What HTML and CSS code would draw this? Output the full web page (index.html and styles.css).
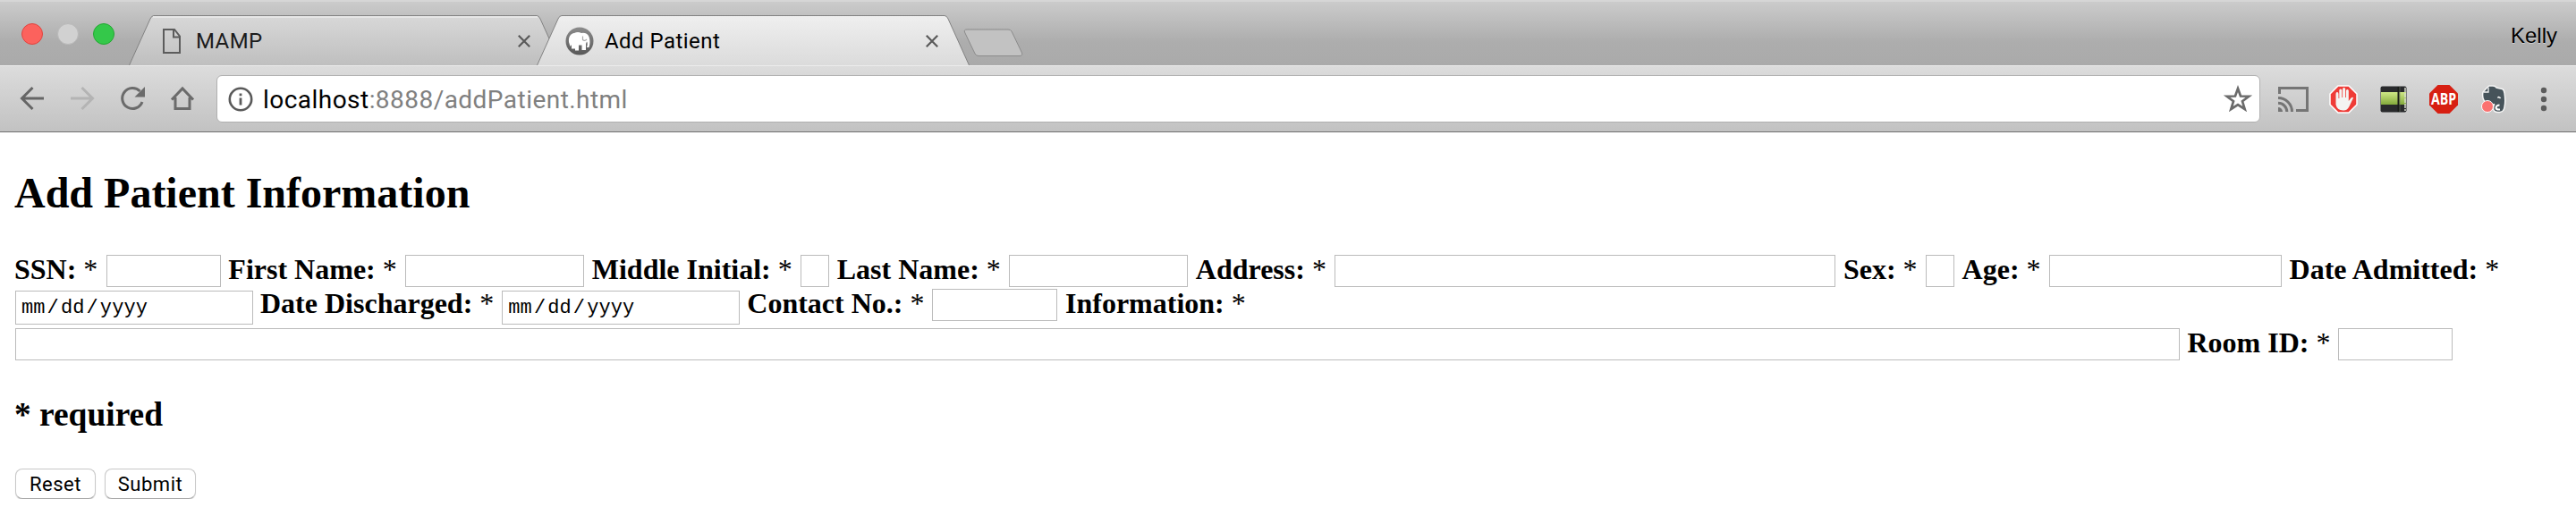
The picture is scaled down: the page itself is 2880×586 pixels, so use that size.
FILE: index.html
```html
<!DOCTYPE html>
<html lang="en">
<head>
<meta charset="utf-8">
<title>Add Patient</title>
<link rel="stylesheet" href="styles.css">
</head>
<body>
<header class="browser">
  <div class="tabstrip">
    <div class="lights"><i class="light red"></i><i class="light gray"></i><i class="light green"></i></div>
    <div class="tab tab-back">
      <svg class="tab-shape" viewBox="0 0 484 56"><defs><linearGradient id="gb" x1="0" y1="0" x2="0" y2="1"><stop offset="0" stop-color="#d8d8d8"/><stop offset="1" stop-color="#bfbfbf"/></linearGradient></defs><path d="M0.5 56L24 4Q25.5 .5 28 .5H456Q458.5 .5 460 4L483.5 56" fill="url(#gb)" stroke="#828282"/><path d="M27 2H457" stroke="#e6e6e6" stroke-width="2"/></svg>
      <svg class="doc" viewBox="0 0 20 28"><path d="M1 1H13L19 8.500V27H1ZM12 1V9.500H19" fill="none" stroke="#5c5c5c" stroke-width="2"/></svg>
      <span class="tab-title mamp">MAMP</span>
      <svg class="close" viewBox="0 0 14 14"><path d="M.8 .8L13.2 13.2M13.2 .8L.8 13.2" stroke="#5a5a5a" stroke-width="2.200"/></svg>
    </div>
    <div class="tab tab-front">
      <svg class="tab-shape" viewBox="0 0 484 56"><defs><linearGradient id="gf" x1="0" y1="0" x2="0" y2="1"><stop offset="0" stop-color="#efefef"/><stop offset="1" stop-color="#dbdbdb"/></linearGradient></defs><path d="M0.5 56L24 4Q25.5 .5 28 .5H456Q458.5 .5 460 4L483.5 56" fill="url(#gf)" stroke="#828282"/></svg>
      <svg class="mampicon" viewBox="0 0 32 32"><defs><linearGradient id="gm" x1="0" y1="0" x2="0" y2="1"><stop offset="0" stop-color="#8c8c8c"/><stop offset="1" stop-color="#585858"/></linearGradient></defs><circle cx="16" cy="16" r="15.500" fill="url(#gm)"/><path d="M4 17C3.500 11 6 7.500 10 7Q14 5 18 7Q24 6 26.500 11Q28.500 17 26.500 23H24Q25.500 18 24 16.500L23 19V26H18.500V20.500H15V26.500H11V24.500H7V20L5.500 22Z" fill="#fff"/><path d="M19.500 10.500V14.500Q21.500 16.500 24 14" fill="none" stroke="#aaa" stroke-width="1.200"/></svg>
      <span class="tab-title addp">Add Patient</span>
      <svg class="close" viewBox="0 0 14 14"><path d="M.8 .8L13.2 13.2M13.2 .8L.8 13.2" stroke="#5a5a5a" stroke-width="2.200"/></svg>
    </div>
    <svg class="newtab" viewBox="0 0 67 33"><path d="M4 1H50Q53 1 54 3L65.500 27Q66.500 30.500 63 30.500H17Q14.500 30.500 13 28L1.500 4Q.5 1 4 1Z" fill="#c2c2c2" stroke="#8b8b8b"/></svg>
    <span class="profile">Kelly</span>
  </div>
  <div class="toolbar">
    <svg class="nav back" viewBox="0 0 28 28"><path d="M27 14H3M14.500 2L2.500 14L14.500 26" fill="none" stroke="#666" stroke-width="3"/></svg>
    <svg class="nav forward" viewBox="0 0 28 28"><path d="M1 14H25M13.500 2L25.500 14L13.500 26" fill="none" stroke="#b4b4b4" stroke-width="3"/></svg>
    <svg class="nav reload" viewBox="0 0 28 28"><path d="M22.500 6A11.500 11.500 0 1 0 25 18" fill="none" stroke="#6b6b6b" stroke-width="3"/><path d="M28 1V12.500H16.500Z" fill="#6b6b6b"/></svg>
    <svg class="nav home" viewBox="0 0 28 28"><path d="M2 15.500L14 3L26 15.500M6 13V25.500H22V13" fill="none" stroke="#6b6b6b" stroke-width="3"/></svg>
    <div class="omnibox">
      <svg class="info" viewBox="0 0 28 28"><circle cx="14" cy="14" r="12.200" fill="none" stroke="#5a5a5a" stroke-width="2.600"/><path d="M14 12.500V20.500M14 7.500V10.200" stroke="#5a5a5a" stroke-width="2.800"/></svg>
      <span class="url"><span class="host">localhost</span>:8888/addPatient.html</span>
      <svg class="star" viewBox="0 0 30 29"><path d="M15 3L18 11.500L27.300 11.700L20 17.300L22.700 26L15 21L7.300 26L10 17.300L2.700 11.700L12 11.500Z" fill="none" stroke="#6b6b6b" stroke-width="2.700"/></svg>
    </div>
    <div class="extensions">
      <div class="slot"><svg class="cast" viewBox="0 0 34 28"><path d="M1.500 8V1.500H32.500V26.500H20" fill="none" stroke="#757575" stroke-width="3"/><path d="M0 12.500A15.500 15.500 0 0 1 15.500 28M0 18.200A9.800 9.800 0 0 1 9.800 28" fill="none" stroke="#757575" stroke-width="3"/><path d="M0 23A5 5 0 0 1 5 28H0Z" fill="#757575"/></svg></div>
      <div class="slot"><svg class="hand" viewBox="0 0 32 32"><path d="M10 1H22L31 10V22L22 31H10L1 22V10Z" fill="#ef3c37" stroke="#fff" stroke-width="1.500"/><path d="M7.500 10Q7.500 8 9 8Q10.500 8 10.500 10V15H11.300V6Q11.300 4.500 12.800 4.500Q14.300 4.500 14.300 6V14H15.100V4.500Q15.100 3 16.600 3Q18.100 3 18.100 4.500V14H18.900V6.500Q18.900 5 20.400 5Q21.800 5 21.800 6.500V18L24.500 14.500Q26.500 13 27 14.500L22.500 24Q20 29 15.500 28.500Q9 28.500 7.500 22Z" fill="#f4f4f2"/></svg></div>
      <div class="slot"><svg class="book" viewBox="0 0 30 30"><defs><linearGradient id="gg" x1="0" y1="0" x2="0" y2="1"><stop offset="0" stop-color="#cfe886"/><stop offset="1" stop-color="#83aa3b"/></linearGradient></defs><rect x=".5" y=".5" width="29" height="29" rx="2" fill="#292a2c"/><path d="M1 7H29V21H1Z" fill="url(#gg)"/><path d="M20.500 1V29" stroke="#181b16" stroke-width="2"/><path d="M22 1V29" stroke="#6d7567" stroke-width=".6"/><path d="M28 2V28" stroke="#d8dcd0" stroke-width="1.500" stroke-dasharray="5 1"/></svg></div>
      <div class="slot"><svg class="abp" viewBox="0 0 32 32"><path d="M9.500 0H22.500L32 9.500V22.500L22.500 32H9.500L0 22.500V9.500Z" fill="#d71f12"/><text x="16" y="22" text-anchor="middle" textLength="28" lengthAdjust="spacingAndGlyphs" class="abptext">ABP</text></svg></div>
      <div class="slot"><svg class="ever" viewBox="0 0 28 32"><path d="M7.500 2L9 1H13Q16 1 17 3L23.500 4.500Q25.500 5 26 9Q27.500 18 26 25Q25 31 19 30.500Q13.500 30.500 13.500 26Q13.500 23 15 21.500Q12 23 11 20.500Q4 21 2.500 16Q1 12 2 8Z" fill="#46535a" stroke="#f5f5f5" stroke-width="1.500"/><path d="M2.500 8H8V2.500" fill="none" stroke="#f5f5f5" stroke-width="1.300"/><path d="M20.500 22.500Q17 22.500 16.500 25.500Q17 28 21 27.500" fill="none" stroke="#fff" stroke-width="2"/><path d="M18.500 14.500Q20 12.500 21.500 15" stroke="#fff" stroke-width="1.500" fill="none"/><circle cx="7" cy="24" r="6.500" fill="#fb7170" stroke="#fff"/></svg></div>
      <div class="slot"><svg class="menu" viewBox="0 0 8 28"><g fill="#5c5c5c"><circle cx="4" cy="4" r="3.200"/><circle cx="4" cy="14" r="3.200"/><circle cx="4" cy="24" r="3.200"/></g></svg></div>
    </div>
  </div>
</header>
<main class="page">
  <h1 class="title">Add Patient Information</h1>
  <form class="form">
    <div class="row first">
      <label class="label"><b>SSN:</b> *</label><input class="field w-ssn">
      <label class="label"><b>First Name:</b> *</label><input class="field w-name">
      <label class="label"><b>Middle Initial:</b> *</label><input class="field w-char">
      <label class="label"><b>Last Name:</b> *</label><input class="field w-name">
      <label class="label"><b>Address:</b> *</label><input class="field w-address">
      <label class="label"><b>Sex:</b> *</label><input class="field w-char">
      <label class="label"><b>Age:</b> *</label><input class="field w-age">
      <label class="label"><b>Date Admitted:</b> *</label>
    </div>
    <div class="row second">
      <div class="field date"><span>mm</span>/<span>dd</span>/<span>yyyy</span></div>
      <label class="label"><b>Date Discharged:</b> *</label><div class="field date"><span>mm</span>/<span>dd</span>/<span>yyyy</span></div>
      <label class="label"><b>Contact No.:</b> *</label><input class="field w-contact">
      <label class="label"><b>Information:</b> *</label>
    </div>
    <div class="row third">
      <input class="field w-info">
      <label class="label"><b>Room ID:</b> *</label><input class="field w-ssn">
    </div>
    <h3 class="required">* required</h3>
    <div class="buttons"><button class="btn reset" type="reset">Reset</button><button class="btn submit" type="button">Submit</button></div>
  </form>
</main>
</body>
</html>
```

FILE: styles.css
```css
* { box-sizing: border-box; }
body { margin: 0; background: #fff; color: #000; font-family: "Liberation Serif", serif; }
svg { display: block; flex: none; overflow: visible; }

.browser { height: 148px; font-family: Roboto, sans-serif; }
.tabstrip { display: flex; height: 73px; background: linear-gradient(#cbcbcb, #adadad 45px, #aaa); border-top: 2px solid #d6d6d6; padding-left: 24px; }
.lights { display: flex; gap: 16px; padding-top: 24px; width: 120px; flex: none; }
.light { width: 24px; height: 24px; border-radius: 50%; border: 1px solid; flex: none; }
.red { background: #fc625d; border-color: #e0443f; }
.gray { background: #d1d1d1; border-color: #b9b9b9; }
.green { background: #34c84a; border-color: #24a833; }
.tab { position: relative; display: flex; width: 484px; height: 56px; margin-top: 15px; flex: none; }
.tab-front { margin-left: -28px; z-index: 1; }
.tab-shape { position: absolute; inset: 0; width: 484px; height: 56px; }
.tab > :not(.tab-shape) { position: relative; }
.doc { width: 20px; height: 28px; margin: 15px 0 0 38px; }
.mampicon { width: 32px; height: 32px; margin: 13px 0 0 32px; }
.tab-title { font-size: 24px; line-height: 28px; margin-top: 15px; letter-spacing: .45px; white-space: nowrap; }
.mamp { margin-left: 17px; color: #1c1c1c; }
.addp { margin-left: 12px; }
.close { width: 14px; height: 14px; margin: 22px 35px 0 auto; }
.newtab { width: 67px; height: 33px; margin: 30px 0 0 -7px; }
.profile { margin: 24px 21px 0 auto; font: 24px/28px "Liberation Sans", sans-serif; text-shadow: 0 1px 0 #d0d0d0; }

.toolbar { display: flex; height: 75px; padding: 10px 8px 0 22px; background: linear-gradient(#dcdcdc, #c2c2c2); border-top: 1px solid #ececec; border-bottom: 1px solid #6f6f6f; }
.nav { width: 28px; height: 28px; margin-top: 12px; }
.forward, .reload, .home { margin-left: 28px; }
.omnibox { display: flex; width: 2285px; height: 53px; margin-left: 24px; padding: 0 9px 0 12px; flex: none; background: #fff; border: 1px solid #b0b0b0; border-radius: 6px; }
.info { width: 28px; height: 28px; margin-top: 12px; }
.url { margin: 10px auto 0 11px; font-size: 28px; line-height: 34px; letter-spacing: .46px; color: #808080; }
.host { color: #000; }
.star { width: 30px; height: 29px; margin-top: 11px; }
.extensions { display: flex; flex: none; height: 53px; margin-left: auto; }
.slot { display: flex; width: 56px; align-items: center; justify-content: center; }
.cast { width: 34px; height: 28px; }
.hand, .abp { width: 32px; height: 32px; }
.book { width: 30px; height: 30px; }
.ever { width: 28px; height: 32px; }
.menu { width: 8px; height: 28px; }
.abptext { font: bold 17px "Open Sans", sans-serif; fill: #fff; }

.page { padding: 0 16px; }
.title { margin: 0; padding-top: 41px; font-size: 48px; line-height: 54px; }
.form { margin-top: 40px; }
.row { display: flex; gap: 8px; font-size: 32px; }
.first { height: 38px; }
.second { height: 44px; }
.third { height: 38px; }
.label { line-height: 36px; white-space: nowrap; flex: none; }
.field { height: 36px; margin: 2px .5px 0 1.5px; padding: 0; border: 1px solid #bbb; border-radius: 0; background: #fff; flex: none; outline: none; }
.second .field, .third .field { margin-left: 1px; margin-right: .5px; }
.w-ssn { width: 128px; }
.w-name { width: 200px; }
.w-char { width: 32px; }
.w-address { width: 560px; }
.w-age { width: 260px; }
.w-contact { width: 140px; }
.w-info { width: 2420px; }
.second .date { width: 266px; height: 38px; margin: 4px 0 0 1px; padding-left: 4px; font: 22px/37px "Liberation Mono", monospace; letter-spacing: .1px; }
.date span { padding: 0 2px; }
.required { margin: 40px 0 0; font-size: 37.44px; line-height: 42px; }
.buttons { display: flex; gap: 10px; margin: 39px 0 0 1px; }
.btn { height: 34px; padding: 1px 0 0; border: 1px solid #c8c8c8; border-bottom-color: #aaa; border-radius: 8px; background: #fff; font: 22px/30px Roboto, sans-serif; letter-spacing: .5px; color: #000; box-shadow: 0 1px 1px #ddd; }
.reset { width: 90px; }
.submit { width: 102px; }
```
